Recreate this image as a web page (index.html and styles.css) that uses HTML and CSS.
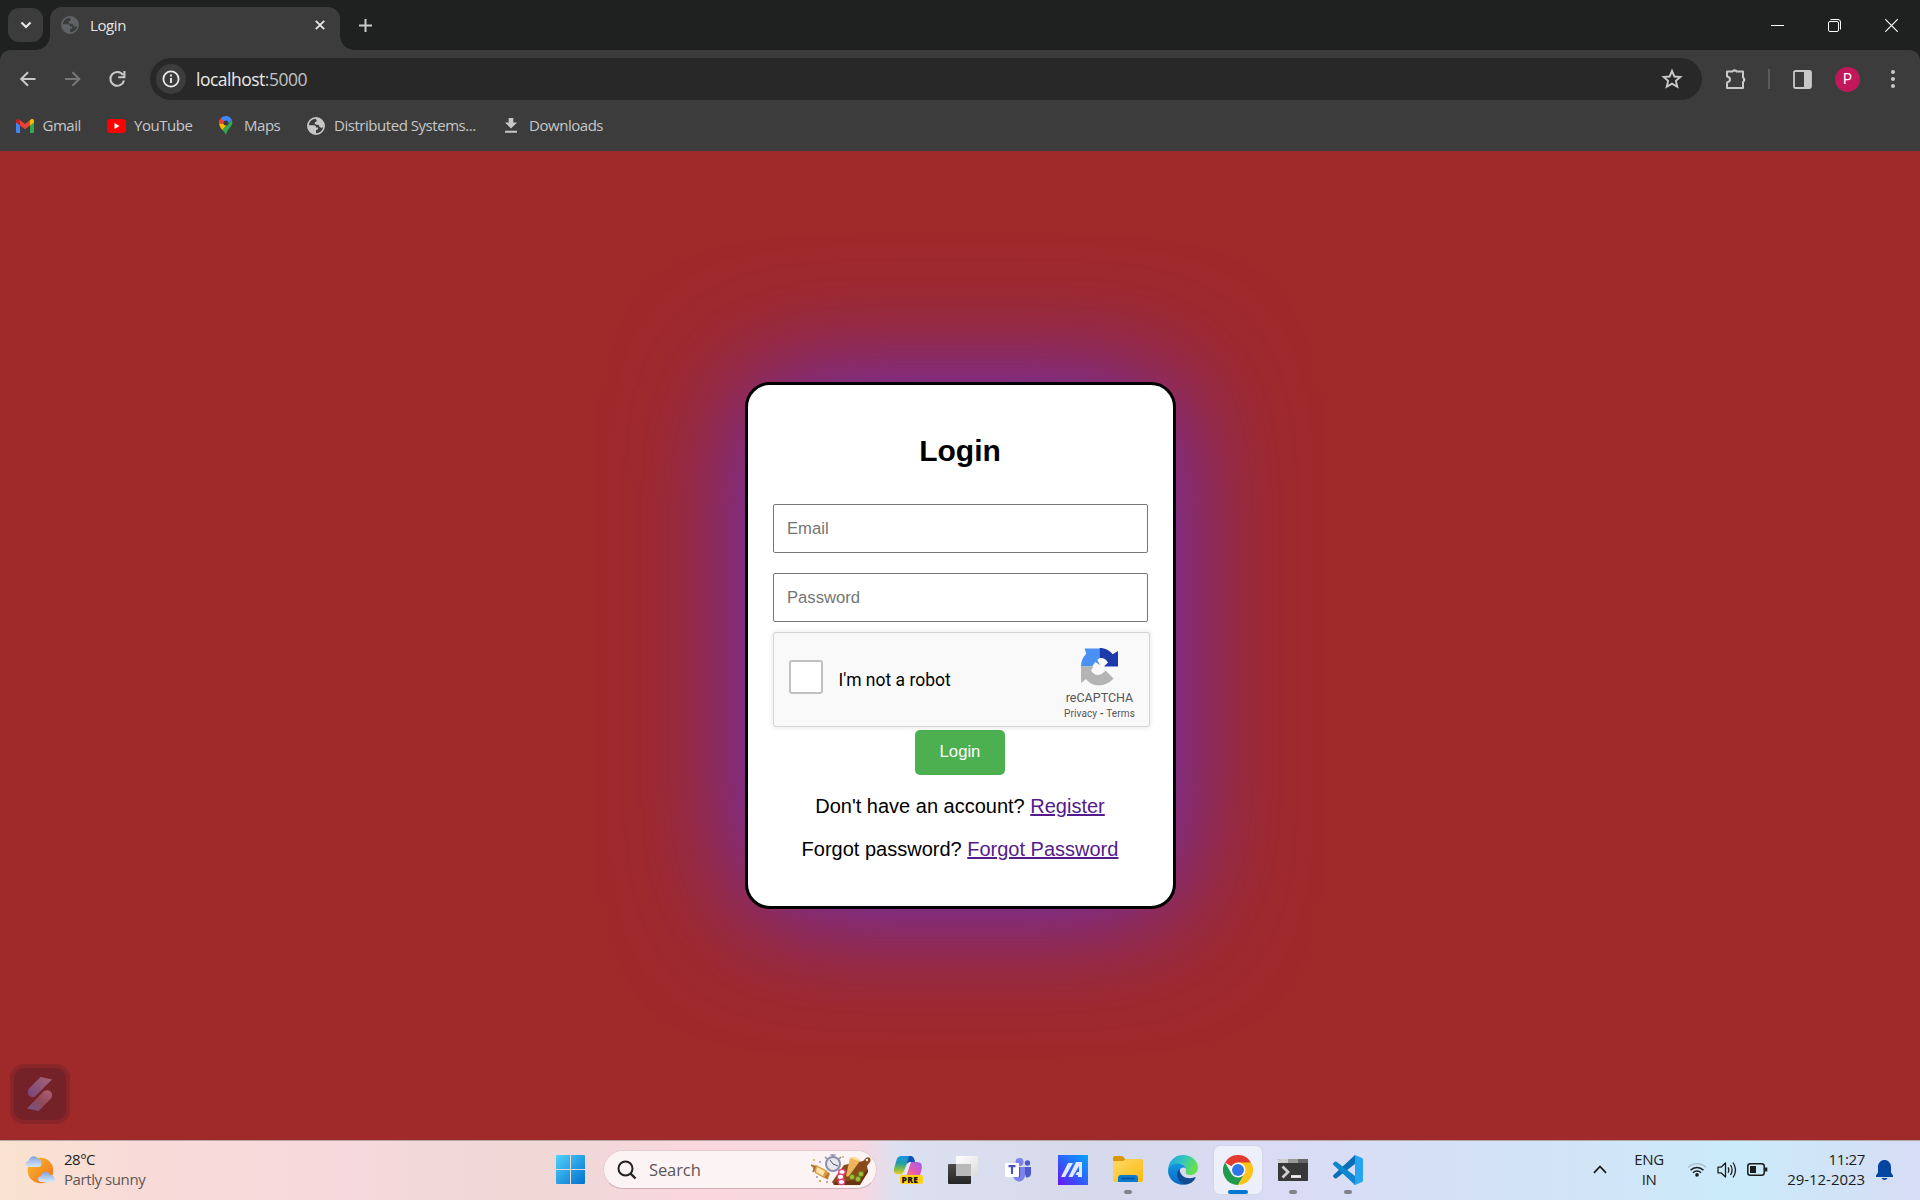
FILE: index.html
```html
<!DOCTYPE html>
<html lang="en">
<head>
<meta charset="utf-8">
<title>Login</title>
<link rel="stylesheet" href="styles.css">
</head>
<body>
<svg width="0" height="0" class="defs" aria-hidden="true">
  <defs>
    <symbol id="globe" viewBox="0 0 18 18"><circle cx="9" cy="9" r="8.1" fill="none" stroke="currentColor" stroke-width="1.7"/><path fill="currentColor" d="M9 1.2c2.8 0 5 1.300 6.500 3.300 1 2.200 1.300 4 1 5.500-1.500 1.200-3.300.8-4-.3-.6-1-.5-2-1.800-1.900-2.100.1-3.200-.6-3-1.800.2-1.300 1.800-1 2-2C9.800 2.900 8.500 2.400 9 1.200zM1.300 8.200h5.200c2 0 2.500 1 2.500 2.200h2.300c0 2.400-1.500 2.200-2.300 2.500v3.700C4.500 16.500 1 13 1.300 8.200z"/></symbol>
    <linearGradient id="win" x1="0" y1="0" x2="1" y2="1"><stop offset="0" stop-color="#4fd3fb"/><stop offset="1" stop-color="#0270cf"/></linearGradient>
    <linearGradient id="sun" x1="0" y1="0" x2="1" y2="1"><stop offset="0" stop-color="#f5bb2c"/><stop offset="1" stop-color="#f4701e"/></linearGradient>
    <linearGradient id="cloud" x1="0" y1="0" x2="0" y2="1"><stop offset="0" stop-color="#7fa3e0"/><stop offset="1" stop-color="#d9e9fc"/></linearGradient>
    <linearGradient id="cpa" x1="0" y1="0" x2="0" y2="1"><stop offset="0" stop-color="#1694e6"/><stop offset=".4" stop-color="#26a0a8"/><stop offset=".7" stop-color="#7dbb4a"/><stop offset="1" stop-color="#f6cf23"/></linearGradient>
    <linearGradient id="cpb" x1="1" y1="0" x2="0" y2="1"><stop offset="0" stop-color="#9a5cf0"/><stop offset=".5" stop-color="#e558b8"/><stop offset="1" stop-color="#ff8a57"/></linearGradient>
    <linearGradient id="asus" x1="1" y1="0" x2="0" y2="1"><stop offset="0" stop-color="#04a6ff"/><stop offset=".5" stop-color="#2d62fb"/><stop offset="1" stop-color="#6a14f2"/></linearGradient>
    <linearGradient id="fold" x1="0" y1="0" x2="1" y2="1"><stop offset="0" stop-color="#ffd965"/><stop offset="1" stop-color="#fab912"/></linearGradient>
    <linearGradient id="edg" x1="0" y1="0" x2="1" y2=".4"><stop offset="0" stop-color="#249edb"/><stop offset=".5" stop-color="#31c5c3"/><stop offset="1" stop-color="#66e04c"/></linearGradient>
    <linearGradient id="edb" x1="0" y1="0" x2="0" y2="1"><stop offset="0" stop-color="#1697e0"/><stop offset="1" stop-color="#0568c5"/></linearGradient>
    <linearGradient id="shade" x1="0" y1="0" x2="0" y2="1"><stop offset="0" stop-color="#4a4a48"/><stop offset="1" stop-color="#262624"/></linearGradient>
    <linearGradient id="glass" x1="0" y1="0" x2="1" y2="1"><stop offset="0" stop-color="#fff"/><stop offset="1" stop-color="#dcdcdc"/></linearGradient>
    <linearGradient id="badgeA" x1="1" y1="0" x2="0" y2="1"><stop offset="0" stop-color="#a86674"/><stop offset="1" stop-color="#74447c"/></linearGradient>
    <linearGradient id="badgeB" x1="1" y1="0" x2="0" y2="1"><stop offset="0" stop-color="#b05d6c"/><stop offset=".5" stop-color="#8f4b5c"/><stop offset="1" stop-color="#75528c"/></linearGradient>
  </defs>
</svg>

<header class="browser">
  <div class="tabstrip">
    <button class="tab-search"><svg width="12" height="8" viewBox="0 0 12 8"><path d="M1.500 1.500 6 6l4.500-4.500" fill="none" stroke="#e8e8e8" stroke-width="2.200"/></svg></button>
    <div class="tab">
      <svg class="tab-icon" width="18" height="18"><use href="#globe"/></svg>
      <span class="tab-title">Login</span>
      <svg class="tab-close" width="10" height="10" viewBox="0 0 10 10"><path d="M.8.8l8.400 8.400M9.200.8.8 9.200" stroke="#e6e6e6" stroke-width="1.800"/></svg>
    </div>
    <svg class="new-tab" width="13" height="13" viewBox="0 0 13 13"><path d="M6.500 0v13M0 6.500h13" stroke="#c9c9c9" stroke-width="2"/></svg>
    <div class="window-controls">
      <svg width="13" height="13" viewBox="0 0 13 13"><path d="M0 6.500h13" stroke="#fff" stroke-width="1"/></svg>
      <svg width="13" height="13" viewBox="0 0 13 13"><rect x=".5" y="2.500" width="10" height="10" rx="1.500" fill="none" stroke="#fff"/><path d="M2.500.5h7.500q2.500 0 2.500 2.500v7.500" fill="none" stroke="#fff"/></svg>
      <svg width="13" height="13" viewBox="0 0 13 13"><path d="M.3.300l12.400 12.400M12.700.3.300 12.700" stroke="#fff" stroke-width="1.200"/></svg>
    </div>
  </div>
  <div class="toolbar">
    <svg class="nav" width="20" height="20" viewBox="0 0 20 20"><path d="M17.500 10H3.500M10 3.200 3.200 10l6.800 6.800" fill="none" stroke="#c8c8c8" stroke-width="2"/></svg>
    <svg class="nav" width="20" height="20" viewBox="0 0 20 20"><path d="M2 10h14M9.500 3.200l6.800 6.800-6.800 6.800" fill="none" stroke="#777" stroke-width="2"/></svg>
    <svg class="nav" width="20" height="20" viewBox="0 0 20 20"><path d="M16 11.500A6.900 6.900 0 1 1 15 6M16.400 2v6.300h-6.200" fill="none" stroke="#c8c8c8" stroke-width="2.100"/></svg>
    <div class="omnibox">
      <span class="site-info"><svg width="18" height="18" viewBox="0 0 18 18"><circle cx="9" cy="9" r="7.600" fill="none" stroke="#e8e8e8" stroke-width="1.800"/><path d="M9 8v5M9 4.600v2" stroke="#e8e8e8" stroke-width="1.900"/></svg></span>
      <span class="url">localhost<em>:5000</em></span>
      <svg class="star" width="22" height="22" viewBox="0 0 22 22"><path d="M11 3l2.400 5.500 6 .5-4.500 3.900 1.400 5.900L11 15.700l-5.300 3.100 1.400-5.900L2.600 9l6-.5z" fill="none" stroke="#c8c8c8" stroke-width="1.900"/></svg>
    </div>
    <svg class="ext" width="22" height="22" viewBox="0 0 22 22"><path d="M2 3.500h5.500a2.300 2.300 0 0 1 4.200 0H18v6.200a2.300 2.300 0 0 1 0 4.200V20H2v-5.500c2-.5 3-1.500 3-3s-1-2.500-3-3z" fill="none" stroke="#c8c8c8" stroke-width="2" stroke-linejoin="round"/><path d="M7.500 3.500a2.200 2.200 0 0 1 4.300 0zM18 9.500a2.200 2.200 0 0 1 0 4.500z" fill="#c8c8c8"/></svg>
    <span class="sep"></span>
    <svg class="panel" width="19" height="19" viewBox="0 0 19 19"><rect x="1" y="1" width="17" height="17" rx="1.500" fill="none" stroke="#c8c8c8" stroke-width="1.800"/><path d="M11 1h7v17h-7z" fill="#c8c8c8"/></svg>
    <span class="avatar">P</span>
    <svg class="menu" width="4" height="18" viewBox="0 0 4 18"><g fill="#c8c8c8"><circle cx="2" cy="2" r="2"/><circle cx="2" cy="9" r="2"/><circle cx="2" cy="16" r="2"/></g></svg>
  </div>
  <nav class="bookmarks">
    <a class="bm gmail"><svg width="18" height="14" viewBox="0 0 18 14"><path d="M0 2v10.800Q0 14 1.200 14H4V5z" fill="#4285f4"/><path d="M18 2v10.800q0 1.200-1.200 1.200H14V5z" fill="#34a853"/><path d="M14 1.200V6.500l4-3V2c0-2-2-2.600-3.200-1.600z" fill="#fbbc04"/><path d="M4 1.200V6.500l-4-3V2C0 0 2-.6 3.200.4z" fill="#c5221f"/><path d="M4 1v5.500l5 3.800 5-3.800V1L9 4.900z" fill="#ea4335"/></svg><span>Gmail</span></a>
    <a class="bm youtube"><svg width="19" height="14" viewBox="0 0 19 14"><rect width="19" height="14" rx="3.500" fill="#f00"/><path d="M7.500 4v6l5-3z" fill="#fff"/></svg><span>YouTube</span></a>
    <a class="bm maps"><svg width="14" height="19" viewBox="0 0 14 19"><path d="M7 19c.7-3 1.500-4.500 4-7.500C13 9 14 7.500 12.900 3.900L3.200 14C5.300 16 6.200 17 7 19z" fill="#34a853"/><path d="M.7 4.300C-.5 8 .5 10.500 3.300 14L12 4z" fill="#fbbc04"/><path d="M1.600 2.500C.2 4 0 6 .1 7.800L5 8l3-6z" fill="#ea4335"/><path d="M1.800 2.300C4-.5 7.800-.2 9.300.4c2 .8 3 2 3.600 3.500L8.500 8 5 5z" fill="#4285f4"/><circle cx="7" cy="7" r="2.500" fill="#3c3c3c"/></svg><span>Maps</span></a>
    <a class="bm dist"><svg width="18" height="18"><use href="#globe"/></svg><span>Distributed Systems...</span></a>
    <a class="bm down"><svg width="12" height="15" viewBox="0 0 12 15"><path d="M3.700 0h4.600v4.500H12L6 10.500 0 4.500h3.700zM0 12.800h12v1.900H0z" fill="#c7c7c7"/></svg><span>Downloads</span></a>
  </nav>
</header>

<main class="page">
  <form class="card">
    <h2>Login</h2>
    <input type="email" placeholder="Email">
    <input type="password" placeholder="Password">
    <div class="captcha">
      <span class="box"></span>
      <span class="label">I'm not a robot</span>
      <div class="brand">
        <svg width="39" height="39" viewBox="0 0 39 39"><path d="M1 19.500C1 14 3 9.500 6.300 6.700L4.500 1.500h15v9.500l-2.300 2 3 5-5-3-3.200 4.500z" fill="#4a90f5"/><path d="M19.500 1c6 0 10.300 2.500 13.200 6.300L38 4v15.500H24l4-4c-2.500-4-5-4.500-8.500-4.500z" fill="#1c3aa9"/><path d="M1 19.500h12.500L11 23.500c3.500 5.500 9 6.500 14.500 0l8 8C26.500 40 12.500 41 6 32l-5 4z" fill="#b4b4b4"/></svg>
        <span class="name">reCAPTCHA</span>
        <span class="terms">Privacy <b>-</b> Terms</span>
      </div>
    </div>
    <button class="submit" type="button">Login</button>
    <p>Don't have an account? <a href="#">Register</a></p>
    <p>Forgot password? <a href="#">Forgot Password</a></p>
  </form>
  <div class="widget">
    <svg width="26" height="34" viewBox="0 0 26 34"><path d="M13.500 0 25 2.500 8 19.500C4.500 21.500.5 19 .8 15 1 13 1.500 12 2.500 11z" fill="url(#badgeA)"/><path d="M11.500 34 0 31.500l17-17.500c3.500-2 8-.5 8 4 0 2-.5 3-1.500 4z" fill="url(#badgeB)"/></svg>
  </div>
</main>

<footer class="taskbar">
  <div class="weather">
    <svg width="31" height="29" viewBox="0 0 31 29"><circle cx="15.500" cy="15.500" r="12.800" fill="url(#sun)"/><path d="M3.500 12C-.5 11.500-.5 6.500 3.500 6 4.500 1 11-.5 13 4c4-.5 5 7.500 1 8z" fill="url(#cloud)"/><path d="M16 27c-4-.3-4-5.500 0-6 1-5 7.500-6 9-1 5-.5 6.500 6.500 2 7z" fill="url(#cloud)"/></svg>
    <div class="lines"><span class="temp">28°C</span><span class="sky">Partly sunny</span></div>
  </div>
  <div class="apps">
    <div class="app"><svg width="29" height="29" viewBox="0 0 29 29"><path fill="url(#win)" d="M1 0h13v14H0V1q0-1 1-1zM15 0h13q1 0 1 1v13H15zM0 15h14v14H1q-1 0-1-1zM15 15h14v13q0 1-1 1H15z"/></svg></div>
    <div class="search">
      <svg width="20" height="20" viewBox="0 0 20 20"><circle cx="8.500" cy="8.500" r="7" fill="none" stroke="#222" stroke-width="2"/><path d="M13.500 13.500l5 5" stroke="#222" stroke-width="2.400"/></svg>
      <span>Search</span>
      <svg class="food" width="60" height="32" viewBox="0 0 60 32"><path d="M21 28 33 11l19-4 3-3c3-2 6 1 4 4l-3 4 1 6-9 13H23z" fill="#8a4a19"/><path d="M23 31h26l8-13v-3L46 26l-22 2z" fill="#6b3410"/><circle cx="56" cy="6" r="1.300" fill="#f4e4e6"/><path d="M35 22 39 4q6-3 10 3L38 22q-2 1-3 0z" fill="#edb55c"/><path d="M39 4q6-3 10 3l-4-1z" fill="#ffe3a0"/><g fill="#fff" stroke="#e2407a" stroke-width="1.300"><ellipse cx="31" cy="18" rx="3.300" ry="2.600"/><ellipse cx="29.500" cy="23" rx="3.300" ry="2.800"/><ellipse cx="30.500" cy="28" rx="3.300" ry="2.600"/></g><g fill="#a8b63a" stroke="#667c1a"><circle cx="41" cy="23" r="2.700"/><circle cx="47" cy="25" r="2.700"/><circle cx="50" cy="20" r="2.700"/></g><circle cx="22" cy="10" r="7" fill="#e7e8f0" stroke="#8e90a8" stroke-width="2"/><path d="M19.500 1h5M22 1v3M14 3l2 2M30 3l-2 2" stroke="#8e90a8" stroke-width="1.500"/><path d="M22 10l-3-4M22 10l5 2" stroke="#55576e"/><path d="M1 12l4-1 10 5 4 4-2 5-4-1-9-5z" fill="#d49a4b"/><path d="m6 13 8 4-2 5-7-4z" fill="#ffe4a6"/><path d="M0 11l4 2-2 5M18 19l-3 4 2 2" stroke="#aa702b" fill="none" stroke-width="1.600"/><g fill="#d8b154"><circle cx="3" cy="6" r="1"/><circle cx="9" cy="27" r="1.200"/><circle cx="32" cy="3" r="1"/></g><g fill="#a58fc4"><circle cx="9" cy="8" r="1"/><circle cx="6" cy="23" r="1"/><circle cx="16" cy="28" r="1"/></g></svg>
    </div>
    <div class="app copilot"><svg width="30" height="29" viewBox="0 0 30 29"><path d="M8 1h9c3 0 4 2 5 6h-5c-2 0-3 1-4 4l-3 7c-1 1-2 1.500-4 1.500C1 19.500 0 16 1.500 12l2-7C4.500 2 6 1 8 1z" fill="url(#cpa)"/><path d="M16 1h2c2 0 3 2 4 6h-5c-1.500 0-2.500.8-3.300 2z" fill="#174fb5"/><path d="M18 7h6c5 0 5.500 4 4.500 8l-2 7H11c2 0 3-2 4-6l2-7z" fill="url(#cpb)"/><path d="M15 9q1-2 3-2l-4 10q-1 2-2.500 2z" fill="#f3e9fb"/><rect x="7" y="20" width="23" height="9" rx="2" fill="#ffd21c"/></svg><b class="pre">PRE</b></div>
    <div class="app"><svg width="30" height="28" viewBox="0 0 30 28"><rect y="8" width="23" height="20" rx="1" fill="url(#shade)"/><rect x="8" width="22" height="20" rx="1" fill="url(#glass)"/><path d="M8 8h15v12H8z" fill="#b9b9b9"/></svg></div>
    <div class="app"><svg width="26" height="24" viewBox="0 0 26 24"><circle cx="14.500" cy="4" r="4" fill="#7b83eb"/><circle cx="22.500" cy="5" r="2.700" fill="#5059c9"/><path d="M18 9h8v7q-1 4-5 3.500z" fill="#5059c9"/><path d="M8 9h12v8c0 4-3 6.500-6 6.500S8.500 21 8 18z" fill="#7b83eb"/><path d="M10 9h5v10h-6z" fill="#4a4fb0"/><rect y="5" width="14" height="14" rx="1" fill="#fff"/><path d="M3.500 8.200h7M7 8.200V16" stroke="#4b53bc" stroke-width="2.200"/></svg></div>
    <div class="app"><svg width="30" height="30" viewBox="0 0 30 30"><path fill="url(#asus)" d="M0 0h30v30H0z"/><path d="M3 22 10 8h5L7 22zM10.500 22 18 7h6v15h-4v-2h-2.500l1.500-3h2v-6L14.500 22z" fill="#dfeaff"/></svg></div>
    <div class="app"><svg width="30" height="27" viewBox="0 0 30 27"><path d="M0 2Q0 0 2 0h7q1 0 3 3h14q4 0 4 2v4H0z" fill="#d9980a"/><path d="M0 5h10l3-2h15q2 0 2 2v19q0 2-2 2H2q-2 0-2-2z" fill="url(#fold)"/><path d="M5 26v-4q0-3 3-3h14q3 0 3 3v4z" fill="#0c7ad0"/><path d="M9 22.500h12" stroke="#0a4d94" stroke-width="1.500" stroke-linecap="round"/></svg><i class="run"></i></div>
    <div class="app"><svg width="30" height="30" viewBox="0 0 30 30"><path d="M0 15A15 15 0 0 1 15 0c10 0 15 7 15 12.500 0 5-4 7.500-7.500 7.500-4 0-5.500-2-4.500-4C19 12 16 9 11 9 5 9 1 13 0 15z" fill="url(#edg)"/><path d="M0 15.500C1 11 5 8 10 8.500c5 .3 8 3 8.500 6C17 11.500 13 12 11.500 15 9 21 15 28 20 29 9 32 0 25 0 15.500z" fill="url(#edb)"/><path d="M11.500 14C8 17 8 24 14 28.500c6 2.500 11-1 13.500-5.500.5-1-.5-1-1-.7C20 25 12 22 11.500 14z" fill="#114a93"/></svg></div>
    <div class="app"><div class="tile"><svg width="30" height="30" viewBox="0 0 30 30"><path d="M15 15 2 7.500A15 15 0 0 1 28 7.500z" fill="#e33b2e"/><path d="M15 15 8.500 18.800 2 7.500A15 15 0 0 0 15 30l6.500-11.200z" fill="#219a4b"/><path d="M15 7.500h13A15 15 0 0 1 15 30l6.500-11.200z" fill="#fcc41b"/><circle cx="15" cy="15" r="7.500" fill="#fff"/><circle cx="15" cy="15" r="6" fill="#2f76ea"/></svg></div><i class="run active"></i></div>
    <div class="app"><svg width="30" height="22" viewBox="0 0 30 22"><rect width="30" height="22" rx="1" fill="#383838"/><path d="M0 1q0-1 1-1h9v4H0z" fill="#ccc"/><path d="M10 0h10v4H10z" fill="#999"/><path d="M20 0h9q1 0 1 1v3H20z" fill="#666"/><path d="M4.500 7.500l5.500 5.500-5.500 5.500" fill="none" stroke="#d0d0d0" stroke-width="2.800"/><path d="M13 17.500h10" stroke="#eee" stroke-width="2.800"/></svg><i class="run"></i></div>
    <div class="app"><svg width="30" height="30" viewBox="0 0 30 30"><path d="M22 0v9L3.500 23.200Q2.500 24 1.500 23L.5 22q-1-1 0-2z" fill="#0a6fb5"/><path d="M22 30v-9L3.500 6.800Q2.500 6 1.500 7L.5 8q-1 1 0 2z" fill="#0c86cf"/><path d="M22 0l7 3q1 .5 1 1.500v21q0 1-1 1.500l-7 3-1.500-1c1 .5 1.500-.5 1.500-1.500v-25c0-1-.5-2-1.500-1.500z" fill="#26a4f0"/></svg><i class="run"></i></div>
  </div>
  <div class="tray">
    <svg class="chev" width="14" height="9" viewBox="0 0 14 9"><path d="M1 7.800 7 1.500l6 6.300" fill="none" stroke="#1c1c1c" stroke-width="1.800"/></svg>
    <div class="lang"><span>ENG</span><span>IN</span></div>
    <svg class="wifi" width="20" height="15" viewBox="0 0 20 15"><path d="M1 5.500a12.500 12.500 0 0 1 18 0" fill="none" stroke="#a9bccb" stroke-width="1.400"/><path d="M3.500 8.300a9 9 0 0 1 13 0M6 10.800a5.600 5.600 0 0 1 8 0" fill="none" stroke="#1c1c1c" stroke-width="1.500"/><circle cx="10" cy="12.900" r="1.800" fill="#1c1c1c"/></svg>
    <svg class="vol" width="20" height="18" viewBox="0 0 20 18"><path d="M1 6.200h3L8.500 2v14L4 11.800H1z" fill="none" stroke="#1c1c1c" stroke-width="1.300" stroke-linejoin="round"/><path d="M11 6.300q1.700 2.700 0 5.400M13.500 4q3.200 5 0 10M16 1.500q5 7.500 0 15" fill="none" stroke="#1c1c1c" stroke-width="1.300"/></svg>
    <svg class="bat" width="21" height="13" viewBox="0 0 21 13"><rect x=".8" y=".8" width="16.400" height="11.400" rx="2.500" fill="none" stroke="#1c1c1c" stroke-width="1.500"/><path d="M3 3h6v7H3z" fill="#1c1c1c"/><path d="M18 4.500h2.300v4H18z" fill="#1c1c1c"/></svg>
    <div class="clock"><span class="time">11:27</span><span>29-12-2023</span></div>
    <svg class="bell" width="17" height="20" viewBox="0 0 17 20"><path d="M8.500 0C12 0 15 2.700 15 7v5.500l2 3V17H0v-1.500l2-3V7c0-4.300 3-7 6.500-7zM5.500 18h6q-1 2-3 2t-3-2z" fill="#0445a0"/></svg>
  </div>
</footer>
</body>
</html>
```
FILE: styles.css
```css
* { box-sizing: border-box; }
body {
  margin: 0;
  width: 1920px;
  height: 1200px;
  overflow: hidden;
  display: flex;
  flex-direction: column;
  font-family: "Open Sans", "Noto Sans", sans-serif;
}
svg { display: block; flex: none; }
.defs { position: absolute; }

/* Browser chrome */
.browser { height: 151px; background: #1f2120; flex: none; }
.tabstrip { height: 50px; display: flex; align-items: center; padding-left: 8px; }
.tab-search {
  width: 35px; height: 34px; border: 0; padding: 0; border-radius: 11px;
  background: #3c3c3c; display: flex; align-items: center; justify-content: center;
}
.tab {
  position: relative; align-self: flex-end; height: 43px; width: 290px; margin-left: 7px;
  padding: 0 15px 7px 11px; border-radius: 12px 12px 0 0; background: #3c3c3c;
  display: flex; align-items: center;
}
.tab::before, .tab::after {
  content: ""; position: absolute; bottom: 0; width: 14px; height: 14px;
}
.tab::before { left: -14px; background: radial-gradient(circle at 0 0, transparent 13.500px, #3c3c3c 14px); }
.tab::after { right: -14px; background: radial-gradient(circle at 100% 0, transparent 13.500px, #3c3c3c 14px); }
.tab-icon { color: #5f6368; }
.tab-title { margin-left: 11px; font-size: 15px; letter-spacing: -.4px; color: #e6e6e6; }
.tab-close { margin-left: auto; }
.new-tab { margin-left: 19px; }
.window-controls { margin-left: auto; display: flex; gap: 44px; padding-right: 22.500px; }

.toolbar {
  height: 58px; background: #3c3c3c; border-radius: 10px 10px 0 0;
  display: flex; align-items: center; padding-left: 18px;
}
.nav { margin-right: 25px; }
.omnibox {
  width: 1552px; height: 42px; border-radius: 21px; background: #282828;
  margin-left: -3px; padding: 0 19px 0 6px; display: flex; align-items: center;
}
.site-info {
  width: 30px; height: 30px; border-radius: 50%; background: #3c3c3c;
  display: flex; align-items: center; justify-content: center;
}
.url { margin-left: 10px; font-size: 17.500px; letter-spacing: -.5px; color: #e8e8e8; }
.url em { font-style: normal; color: #c2c2c2; }
.star { margin-left: auto; }
.ext { margin-left: 23px; }
.sep { width: 2px; height: 20px; margin-left: 21px; background: #5c5c5c; }
.panel { margin-left: 23px; }
.avatar {
  width: 25px; height: 25px; margin-left: 23px; border-radius: 50%;
  background: #c2185b; color: #fff; font: 14px/25px Roboto, sans-serif; text-align: center;
}
.menu { margin-left: 31px; }

.bookmarks { height: 43px; background: #3c3c3c; display: flex; padding-left: 16px; }
.bm { display: flex; align-items: center; height: 35px; font-size: 15px; letter-spacing: -.46px; color: #c7c7c7; white-space: nowrap; }
.bm span { display: block; margin-top: -2px; }
.gmail { width: 91px; gap: 8.500px; }
.youtube { width: 112px; gap: 8px; }
.maps { width: 88px; gap: 11px; }
.dist { width: 198px; gap: 9px; }
.down { gap: 12px; }

/* Page */
.page {
  position: relative; height: 989px; flex: none; background: #a02a2a;
  display: flex; align-items: center; justify-content: center; overflow: hidden;
}
.card {
  width: 431px; height: 527px; padding: 25px; border: 3px solid #000; border-radius: 25px;
  background: #fff; box-shadow: 0 0 125px #622ed0; text-align: center;
  font-family: "Liberation Sans", Arial, sans-serif;
  display: flex; flex-direction: column; align-items: center;
}
.card h2 { margin: 24px 0 26px; font-size: 30px; line-height: 34px; color: #000; }
.card input {
  display: block; width: 375px; height: 49px; margin: 10px 0; padding: 0 13.500px;
  border: 1px solid #767676; border-radius: 2px; font: 16.667px "Liberation Sans", Arial, sans-serif;
}
.card input::placeholder { color: #757575; }
.captcha {
  width: 377px; height: 95px; margin-left: 2px; border: 1px solid #d3d3d3; border-radius: 3px;
  background: #f9f9f9; box-shadow: 0 0 5px 1px rgba(0, 0, 0, .08); flex: none;
  display: flex; align-items: center; padding-left: 15px; font-family: Roboto, sans-serif;
}
.captcha .box { width: 34px; height: 34px; margin-bottom: 5px; border: 2px solid #c1c1c1; border-radius: 3px; background: #fff; }
.captcha .label { margin-left: 16px; font-size: 17.500px; color: #000; }
.brand { margin: 0 11px 0 auto; width: 76px; display: flex; flex-direction: column; align-items: center; color: #555; padding-top: 8px; }
.brand .name { font-size: 12.500px; line-height: 15px; margin-top: 4px; }
.brand .terms { font-size: 10px; line-height: 14px; margin-top: 2px; letter-spacing: .12px; white-space: nowrap; }
.submit {
  width: 90px; height: 45px; margin-top: 3px; padding: 0 0 2px; border: 0; border-radius: 5px;
  background: #4caf50; color: #fff; font: 16.667px "Liberation Sans", Arial, sans-serif; flex: none;
}
.card p { margin: 20px 0 0; font-size: 20px; line-height: 23px; color: #000; white-space: nowrap; }
.card a { color: #551a8b; }
.widget {
  position: absolute; left: 10px; bottom: 16px; width: 60px; height: 60px;
  border: 4px solid #8a2529; border-radius: 14px; background: #742127;
  display: flex; align-items: center; justify-content: center;
}

/* Taskbar */
.taskbar {
  height: 60px; flex: none; display: flex; align-items: center; border-top: 1px solid #b3a7aa; padding-bottom: 2px; color: #1c1c1c; font-size: 15px;
  background: linear-gradient(90deg, #fae3cf 0, #f8dbd8 130px, #f7d9dc 330px, #efd8d6 540px, #fad7de 700px, #f7d7e0 860px, #dce1f2 900px, #d6daeb 1080px, #d9dcf5 1300px, #d2e4f7 1560px, #cbebfa 1740px, #d6dcf5 1920px);
}
.weather { width: 543px; display: flex; align-items: center; padding-left: 25px; }
.lines { display: flex; flex-direction: column; margin: -2px 0 0 8px; line-height: 20px; }
.temp { letter-spacing: -.5px; }
.sky { color: #5f5654; letter-spacing: -.42px; }
.apps { display: flex; align-items: center; height: 57px; }
.app { position: relative; width: 55px; height: 57px; display: flex; align-items: center; justify-content: center; }
.search {
  width: 274px; height: 39px; margin: 0 3px 0 5px; border-radius: 20px; background: #fcf3f5;
  border: 1px solid #e6cbd1; border-bottom-color: #cdb0b7;
  display: flex; align-items: center; padding: 0 5px 0 13px; font-size: 16.500px; letter-spacing: -.1px; color: #5c5658;
}
.search span { margin-left: 12px; }
.food { margin-left: auto; }
.pre { position: absolute; left: 21.500px; top: 33.500px; font: 800 8.500px/10px "Open Sans", sans-serif; letter-spacing: .3px; color: #111; }
.tile {
  width: 48px; height: 48px; border-radius: 6px; background: #edeffa; box-shadow: 0 0 1px 1px #d3d6e8;
  display: flex; align-items: center; justify-content: center;
}
.run { position: absolute; left: 23.500px; top: 48.500px; width: 8px; height: 4px; border-radius: 2px; background: #808189; }
.run.active { left: 17.500px; width: 20px; background: #0078d4; }
.tray { margin-left: auto; display: flex; align-items: center; padding-right: 27px; line-height: 20px; }
.lang { width: 44px; margin: -1px 0 0 20px; text-align: center; display: flex; flex-direction: column; letter-spacing: -.4px; }
.wifi { margin-left: 16px; }
.vol { margin-left: 10px; }
.bat { margin-left: 10px; }
.clock { width: 80px; margin: -2px 0 0 17px; display: flex; flex-direction: column; align-items: flex-end; letter-spacing: -.05px; white-space: nowrap; }
.time { letter-spacing: -.35px; }
.bell { margin-left: 11px; }
```
